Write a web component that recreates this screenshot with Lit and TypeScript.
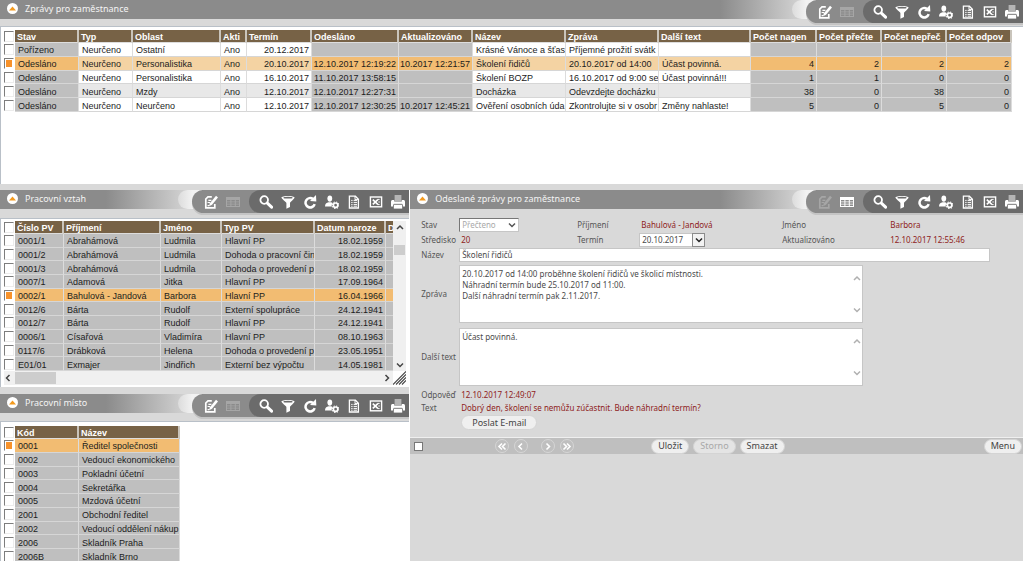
import { LitElement, html, svg, css, nothing } from "lit";
import { customElement, property } from "lit/decorators.js";
import { classMap } from "lit/directives/class-map.js";
import { styleMap } from "lit/directives/style-map.js";

const icons: Record<string, unknown> = {
  edit: svg`
    <path d="M7.8 1.8H4L1.8 4v8.8h9V9" fill="none" stroke="currentColor" stroke-width="1.7"/>
    <path d="M4.400 5.400h3M3.600 7.500h2.600M3.600 10.600h1.600" stroke="currentColor" stroke-width="1.2"/>
    <path d="M12 .8l2 1.8-6 7.2-3 1.4.9-3z" fill="currentColor"/>`,
  table: svg`
    <path fill-rule="evenodd" fill="currentColor" d="M0 2h14v10H0zM1 5v1.4h3.4V5zM5.4 5v1.4h3.4V5zM9.8 5v1.4H13V5zM1 7.3v1.4h3.4V7.3zM5.4 7.3v1.4h3.4V7.3zM9.8 7.3v1.4H13V7.3zM1 9.6V11h3.4V9.6zM5.4 9.6V11h3.4V9.6zM9.8 9.6V11H13V9.6z"/>`,
  search: svg`
    <circle cx="5.2" cy="5" r="3.8" fill="none" stroke="currentColor" stroke-width="1.8"/>
    <path d="M8.6 8.4l4 3.8" stroke="currentColor" stroke-width="3" stroke-linecap="round"/>`,
  filter: svg`
    <path d="M.4 2.6C.4.4 13.6.4 13.6 2.6c0 1.200-4.600 4.600-4.600 5.600v3.800L5.4 13.8V8.2C5.4 7.2.4 3.8.4 2.6z" fill="currentColor"/>
    <ellipse cx="7" cy="2.7" rx="4.600" ry=".9" fill="#6b6b6b"/>`,
  refresh: svg`
    <path d="M10 3.900A4.700 4.700 0 1 0 11.700 9.200" fill="none" stroke="currentColor" stroke-width="2.500"/>
    <path d="M7 6L13 0l.3 6.600z" fill="currentColor"/>`,
  user: svg`
    <ellipse cx="4.8" cy="3.6" rx="2.4" ry="3.1" fill="currentColor"/>
    <path d="M0 11.6c0-3 1.4-3.6 3.6-4.4h2.4c1 .3 1.6.6 1.8 1-1 1-1.4 2.2-.8 3.4z" fill="currentColor"/>
    <circle cx="10.6" cy="10.2" r="2.2" fill="none" stroke="currentColor" stroke-width="1.7"/>
    <circle cx="10.6" cy="10.2" r="3.3" fill="none" stroke="currentColor" stroke-width="1.1" stroke-dasharray="1.3 1.3"/>`,
  doc: svg`
    <path d="M2.4 1.2h6l3 3v8.8h-9z" fill="none" stroke="currentColor" stroke-width="1.3"/>
    <path d="M8 1v3.6h3.6" fill="none" stroke="currentColor"/>
    <path d="M4.2 5.4h1.4M6.6 5.4h3.4M4.2 7.4h1.4M6.6 7.4h3.4M4.2 9.4h1.4M6.6 9.4h3.4M4.2 11.2h1.4M6.6 11.2h3.4" stroke="currentColor" stroke-width="1"/>`,
  excel: svg`
    <rect x="1.4" y="2" width="11.2" height="9.800" fill="none" stroke="currentColor" stroke-width="1.4"/>
    <path d="M3.800 4.6l5 4.8M8.800 4.6l-5 4.8" stroke="currentColor" stroke-width="1.6"/>
    <path d="M8.4 4.4h2.2M9.4 7h1.4M8.4 9.6h2.2" stroke="currentColor" stroke-width="1"/>`,
  print: svg`
    <rect x="3.6" y="0" width="6.8" height="6" fill="#b5b5b5"/>
    <path d="M0 7C0 5.600.6 5 1.800 5h1.400v1.6h7.600V5h1.400c1.200 0 1.800.6 1.800 2v4.4h-2V9.4H2v2H0z" fill="currentColor"/>
    <rect x="2.8" y="9.6" width="8.4" height="4" fill="currentColor"/>
    <path d="M2.800 9.300h8.400" stroke="#6b6b6b" stroke-width=".8"/>`,
};

interface Column {
  title: string;
  width: number;
  align?: "right";
  shade?: boolean;
}

@customElement("panel-header")
class PanelHeader extends LitElement {
  @property() heading = "";
  @property() inactive = "table";

  static styles = css`
    :host {
      display: flex;
      height: 19px;
      background: #8b8b8b;
      font: 9px/18px "Noto Sans", sans-serif;
    }
    .collapse {
      width: 11px;
      height: 11px;
      margin: 3px 7px 0;
      padding: 0;
      border: 0;
      border-radius: 50%;
      background: #fff;
      display: grid;
      place-items: center;
    }
    .title {
      flex: 1;
      margin: 0;
      color: #f4f4f4;
      font: inherit;
      white-space: nowrap;
    }
    .fade {
      width: 86px;
      background: linear-gradient(to right, #8b8b8b, #d2d2d2 80px);
    }
    .glow {
      width: 24px;
      margin: 0 -10px 0 -14px;
      border-radius: 10px 0 0 10px;
      background: linear-gradient(to right, #dcdcdc, #f2f2f2 60%);
    }
    .tools {
      display: flex;
      height: 23px;
      border-radius: 12px 0 0 12px;
      background: #8b8b8b;
      box-shadow: 0 2px 0 #c4c4c4;
      padding-left: 8px;
      position: relative;
    }
    .group {
      display: flex;
    }
    .dark {
      margin-left: 5px;
      padding-left: 6px;
      border-radius: 12px 0 0 12px;
      background: #6b6b6b;
    }
    .tool {
      width: 22px;
      padding: 0;
      border: 0;
      background: none;
      color: #fff;
      display: grid;
      place-items: center;
    }
    .tool:disabled {
      color: #a6a6a6;
    }
  `;

  tool(name: string, label: string) {
    return html`<button class="tool" aria-label=${label} ?disabled=${this.inactive === name}>
      <svg width="14" height="14" viewBox="0 0 14 14">${icons[name]}</svg>
    </button>`;
  }

  render() {
    return html`
      <button class="collapse" aria-label="Sbalit">
        <svg width="7" height="5" viewBox="0 0 7 5"><path d="M0 4.5L3.5.5 7 4.5z" fill="#f39a1e" /></svg>
      </button>
      <h2 class="title">${this.heading}</h2>
      <div class="fade"></div>
      <div class="glow"></div>
      <div class="tools">
        <div class="group">${this.tool("edit", "Formulář")}${this.tool("table", "Tabulka")}</div>
        <div class="group dark">
          ${this.tool("search", "Hledat")}${this.tool("filter", "Filtr")}${this.tool("refresh", "Obnovit")}
          ${this.tool("user", "Nastavení")}${this.tool("doc", "Sestava")}${this.tool("excel", "Excel")}
          ${this.tool("print", "Tisk")}
        </div>
      </div>
    `;
  }
}

@customElement("data-grid")
class DataGrid extends LitElement {
  @property({ attribute: false }) columns: Column[] = [];
  @property({ attribute: false }) rows: string[][] = [];
  @property({ type: Number }) selected = 0;
  @property() label = "";

  static styles = css`
    :host {
      display: block;
      overflow: hidden;
    }
    .grid {
      border-collapse: separate;
      border-spacing: 0;
      table-layout: fixed;
      font: 9px/10px "Liberation Sans", Arial, sans-serif;
      color: #1c1c1c;
    }
    .pick {
      width: 11px;
    }
    .cell,
    .head,
    .mark {
      padding: 0;
      box-sizing: border-box;
      white-space: nowrap;
      overflow: hidden;
    }
    .head {
      padding: 2px 0 0 2px;
      text-align: left;
      color: #fff;
      background: #776246;
      border-bottom: 1px solid #ddd;
      border-right: 2px solid #c9c4bb;
    }
    .cell {
      padding: 2px 2px 0 3px;
      background: #fff;
      border-bottom: 1px solid #d6d6d6;
      border-right: 1px solid #dcdcdc;
    }
    .cell.right {
      padding-left: 0;
      text-align: right;
    }
    .odd .cell {
      background: #e8e8e8;
    }
    .row .shade {
      background: #bfbfbf;
    }
    .on .cell {
      background: #f4d3a3;
    }
    .on .shade {
      background: #f2bc72;
    }
    .box {
      appearance: none;
      display: block;
      width: 10px;
      height: 11px;
      margin: 0;
      box-sizing: border-box;
      background: #fff;
      border: 1px solid #ececec;
      border-top-color: #7d7d7d;
      border-left-color: #7d7d7d;
    }
    .box:checked {
      background: #f7922b;
      border-right-color: #fff;
      border-bottom-color: #fff;
      box-shadow: inset 0 0 0 1px #fff;
    }
  `;

  render() {
    const width = this.columns.reduce((sum, c) => sum + c.width, 11);
    const height = Math.round(((this.rows.length + 1) * 41) / 3);
    return html`
      <table class="grid" aria-label=${this.label} style=${styleMap({ width: `${width}px`, height: `${height}px` })}>
        <colgroup>
          <col class="pick" />
          ${this.columns.map((c) => html`<col style=${styleMap({ width: `${c.width}px` })} />`)}
        </colgroup>
        <thead>
          <tr>
            <td class="mark"><input class="box" type="checkbox" aria-label="Vybrat vše" /></td>
            ${this.columns.map((c) => html`<th class="head" scope="col">${c.title}</th>`)}
          </tr>
        </thead>
        <tbody>
          ${this.rows.map(
            (row, i) => html`<tr class=${classMap({ row: true, odd: i % 2 === 1 && this.columns.length > 6, on: i === this.selected })}>
              <td class="mark">
                <input class="box" type="checkbox" aria-label=${row[0]} .checked=${i === this.selected} />
              </td>
              ${this.columns.map(
                (c, j) =>
                  html`<td class=${classMap({ cell: true, shade: !!c.shade, right: c.align === "right" })}>
                    ${row[j] || nothing}
                  </td>`,
              )}
            </tr>`,
          )}
        </tbody>
      </table>
    `;
  }
}

const chevron = (dir: "up" | "down" | "left" | "right") => {
  const d = { up: "M1 6l3-3 3 3", down: "M1 2.5l3 3 3-3", left: "M5.5 1l-3 3 3 3", right: "M2.5 1l3 3-3 3" }[dir];
  return html`<svg width="8" height="8" viewBox="0 0 8 8">
    <path d=${d} fill="none" stroke="currentColor" stroke-width="1.5" />
  </svg>`;
};

@customElement("message-form")
class MessageForm extends LitElement {
  static styles = css`
    :host {
      display: block;
      font: 8px/14px "Noto Sans", sans-serif;
      color: #555;
    }
    .form {
      display: grid;
      grid-template-columns: 38px 118px 62px 143px 106px 1fr;
      align-items: center;
      padding: 9px 33px 7px 11px;
      row-gap: 1px;
    }
    .wide {
      grid-column: 2 / -1;
    }
    .label {
      white-space: nowrap;
    }
    .value {
      padding-left: 2px;
      color: #8f1d22;
      white-space: nowrap;
    }
    .state,
    .date,
    .name,
    .memo {
      font: inherit;
      color: #4a4a4a;
      background: #fff;
      box-sizing: border-box;
      border: 1px solid #c6c6c6;
      margin: 0;
    }
    .picker {
      position: relative;
      display: flex;
      align-items: center;
    }
    .short {
      width: 60px;
    }
    .state {
      appearance: none;
      width: 100%;
      height: 14px;
      padding: 0 2px;
      border-top-color: #777;
      border-left-color: #777;
      line-height: 12px;
      color: #a9a9a9;
      opacity: 1;
    }
    .arrow {
      position: absolute;
      right: 3px;
      display: flex;
      color: #555;
      pointer-events: none;
    }
    .medium {
      width: 66px;
    }
    .date {
      flex: 1;
      min-width: 0;
      height: 14px;
      padding: 0 2px;
      border-right: 0;
    }
    .open {
      width: 13px;
      height: 14px;
      padding: 0;
      display: grid;
      place-items: center;
      background: #f2f2f2;
      border: 1px solid #8b8b8b;
      color: #222;
    }
    .name {
      width: 100%;
      height: 14px;
      padding: 0 2px;
    }
    .area {
      position: relative;
      display: flex;
      width: 404px;
      max-width: 100%;
      padding: 2px 0;
    }
    .memo {
      flex: 1;
      height: 58px;
      padding: 2px 14px 2px 2px;
      line-height: 11px;
      resize: none;
      overflow: hidden;
    }
    .rail {
      position: absolute;
      top: 11px;
      right: 2px;
      bottom: 11px;
      display: flex;
      flex-direction: column;
      justify-content: space-between;
      color: #b0b0b0;
    }
    .reply {
      line-height: 12px;
    }
    .send {
      display: flex;
    }
    .pill {
      height: 15px;
      padding: 0 6px;
      border: 1px solid #d4d4d4;
      border-radius: 8px;
      background: #efefef;
      color: #444;
      font: 9px/12px "Noto Sans", sans-serif;
      white-space: nowrap;
    }
    .mail {
      margin-left: 2px;
      padding: 0 10px;
    }
    .pill:disabled {
      color: #a8a8a8;
      background: #e4e4e4;
    }
    .bar {
      display: flex;
      align-items: center;
      height: 16px;
      padding: 0 1px 0 4px;
      background: #bfbfbf;
      border-top: 1px solid #efefef;
    }
    .all {
      appearance: none;
      width: 9px;
      height: 9px;
      margin: 0 72px 0 0;
      box-sizing: border-box;
      background: #fff;
      border: 1px solid #777;
    }
    .nav {
      width: 14px;
      height: 14px;
      margin-right: 5px;
      padding: 0;
      border: 1px solid #d6d6d6;
      border-radius: 50%;
      background: none;
      display: grid;
      place-items: center;
      color: #fff;
    }
    .prev {
      margin-right: 13px;
    }
    .actions {
      display: flex;
      gap: 4px;
      margin-left: 72px;
    }
    .menu {
      margin-left: auto;
    }
  `;

  memo(id: string, label: string, text: string) {
    return html`
      <label class="label" for=${id}>${label}</label>
      <div class="wide area">
        <textarea class="memo" id=${id} .value=${text}></textarea>
        <div class="rail">${chevron("up")}${chevron("down")}</div>
      </div>
    `;
  }

  nav(kind: string, label: string) {
    const d: Record<string, string> = {
      first: "M5 1.5L2 4.5l3 3M8.5 1.5l-3 3 3 3",
      prev: "M6 1.5L3 4.5l3 3",
      next: "M3.5 1.5l3 3-3 3",
      last: "M1.5 1.5l3 3-3 3M5 1.5l3 3-3 3",
    };
    return html`<button class=${classMap({ nav: true, prev: kind === "prev" })} aria-label=${label}>
      <svg width="10" height="9" viewBox="0 0 10 9">
        <path d=${d[kind]} fill="none" stroke="currentColor" stroke-width="1.6" />
      </svg>
    </button>`;
  }

  render() {
    return html`
      <div class="form">
        <label class="label" for="state">Stav</label>
        <div class="picker short">
          <select class="state" id="state" disabled>
            <option>Přečteno</option>
          </select>
          <span class="arrow">${chevron("down")}</span>
        </div>
        <span class="label">Příjmení</span>
        <span class="value">Bahulová - Jandová</span>
        <span class="label">Jméno</span>
        <span class="value">Barbora</span>

        <span class="label">Středisko</span>
        <span class="value">20</span>
        <label class="label" for="date">Termín</label>
        <div class="picker medium">
          <input class="date" id="date" value="20.10.2017" />
          <button class="open" aria-label="Kalendář">${chevron("down")}</button>
        </div>
        <span class="label">Aktualizováno</span>
        <span class="value">12.10.2017 12:55:46</span>

        <label class="label" for="name">Název</label>
        <div class="wide picker"><input class="name" id="name" value="Školení řidičů" /></div>

        ${this.memo(
          "message",
          "Zpráva",
          "20.10.2017 od 14:00 proběhne školení řidičů ve školicí místnosti.\nNáhradní termín bude 25.10.2017 od 11:00.\nDalší náhradní termín pak 2.11.2017.",
        )}
        ${this.memo("extra", "Další text", "Účast povinná.")}

        <span class="label reply">Odpověď</span>
        <span class="wide value reply">12.10.2017 12:49:07</span>
        <span class="label reply">Text</span>
        <span class="wide value reply">Dobrý den, školení se nemůžu zúčastnit. Bude náhradní termín?</span>
        <div class="wide send"><button class="pill mail">Poslat E-mail</button></div>
      </div>
      <div class="bar">
        <input class="all" type="checkbox" aria-label="Vybrat záznam" />
        ${this.nav("first", "První")}${this.nav("prev", "Předchozí")}${this.nav("next", "Další")}${this.nav(
          "last",
          "Poslední",
        )}
        <div class="actions">
          <button class="pill">Uložit</button>
          <button class="pill" disabled>Storno</button>
          <button class="pill">Smazat</button>
        </div>
        <button class="pill menu">Menu</button>
      </div>
    `;
  }
}

const messageColumns: Column[] = [
  { title: "Stav", width: 64, shade: true },
  { title: "Typ", width: 54 },
  { title: "Oblast", width: 88 },
  { title: "Akti", width: 26 },
  { title: "Termín", width: 65, align: "right" },
  { title: "Odesláno", width: 87, align: "right", shade: true },
  { title: "Aktualizováno", width: 74, align: "right", shade: true },
  { title: "Název", width: 93 },
  { title: "Zpráva", width: 93 },
  { title: "Další text", width: 92 },
  { title: "Počet nagen", width: 66, align: "right", shade: true },
  { title: "Počet přečte", width: 65, align: "right", shade: true },
  { title: "Počet nepřeč", width: 65, align: "right", shade: true },
  { title: "Počet odpov", width: 65, align: "right", shade: true },
];

const messages = [
  ["Pořízeno", "Neurčeno", "Ostatní", "Ano", "20.12.2017", "", "", "Krásné Vánoce a šťas", "Příjemné prožití svátk", "", "", "", "", ""],
  ["Odesláno", "Neurčeno", "Personalistika", "Ano", "20.10.2017", "12.10.2017 12:19:22", "10.2017 12:21:57", "Školení řidičů", "20.10.2017 od 14:00", "Účast povinná.", "4", "2", "2", "2"],
  ["Odesláno", "Neurčeno", "Personalistika", "Ano", "16.10.2017", "11.10.2017 13:58:15", "", "Školení BOZP", "16.10.2017 od 9:00 se", "Účast povinná!!!", "1", "1", "0", "0"],
  ["Odesláno", "Neurčeno", "Mzdy", "Ano", "12.10.2017", "12.10.2017 12:27:31", "", "Docházka", "Odevzdejte docházku", "", "38", "0", "38", "0"],
  ["Odesláno", "Neurčeno", "Neurčeno", "Ano", "12.10.2017", "12.10.2017 12:30:25", "10.2017 12:45:21", "Ověření osobních úda", "Zkontrolujte si v osobr", "Změny nahlaste!", "5", "0", "5", "0"],
];

const contractColumns: Column[] = [
  { title: "Číslo PV", width: 49, shade: true },
  { title: "Příjmení", width: 97, shade: true },
  { title: "Jméno", width: 61, shade: true },
  { title: "Typ PV", width: 93, shade: true },
  { title: "Datum naroze", width: 71, shade: true, align: "right" },
  { title: "D", width: 60, shade: true },
];

const contracts = [
  ["0001/1", "Abrahámová", "Ludmila", "Hlavní PP", "18.02.1959"],
  ["0001/2", "Abrahámová", "Ludmila", "Dohoda o pracovní čin", "18.02.1959"],
  ["0001/3", "Abrahámová", "Ludmila", "Dohoda o provedení p", "18.02.1959"],
  ["0007/1", "Adamová", "Jitka", "Hlavní PP", "17.09.1964"],
  ["0002/1", "Bahulová - Jandová", "Barbora", "Hlavní PP", "16.04.1966"],
  ["0012/6", "Bárta", "Rudolf", "Externí spolupráce", "24.12.1941"],
  ["0012/7", "Bárta", "Rudolf", "Hlavní PP", "24.12.1941"],
  ["0006/1", "Císařová", "Vladimíra", "Hlavní PP", "08.10.1963"],
  ["0117/6", "Drábková", "Helena", "Dohoda o provedení p", "23.05.1951"],
  ["E01/01", "Exmajer", "Jindřich", "Externí bez výpočtu", "14.05.1981"],
];

const placeColumns: Column[] = [
  { title: "Kód", width: 64, shade: true },
  { title: "Název", width: 101, shade: true },
];

const places = [
  ["0001", "Ředitel společnosti"],
  ["0002", "Vedoucí ekonomického"],
  ["0003", "Pokladní účetní"],
  ["0004", "Sekretářka"],
  ["0005", "Mzdová účetní"],
  ["2001", "Obchodní ředitel"],
  ["2002", "Vedoucí oddělení nákup"],
  ["2006", "Skladník Praha"],
  ["2006B", "Skladník Brno"],
];

@customElement("app-root")
class AppRoot extends LitElement {
  static styles = css`
    :host {
      display: flex;
      flex-direction: column;
      height: 100vh;
      overflow: hidden;
      background: #d9d9d9;
    }
    .body {
      margin-top: 7px;
      padding: 3px 0 0 3px;
      background: #fff;
      border-top: 1px solid #b9c0c8;
      border-left: 1px solid #b9c0c8;
      box-sizing: border-box;
    }
    .messages {
      min-height: 158px;
      margin-bottom: 6px;
    }
    .lower {
      flex: 1;
      min-height: 0;
      display: grid;
      grid-template-columns: 2fr 3fr;
    }
    .left {
      min-width: 0;
      min-height: 0;
      display: flex;
      flex-direction: column;
    }
    .right {
      min-width: 0;
      border-left: 1px solid #fff;
    }
    .contracts {
      display: grid;
      grid-template-columns: 1fr 13px;
      grid-template-rows: auto 14px;
      margin-top: 9px;
      margin-bottom: 7px;
      padding: 2px 3px 2px;
    }
    .narrow {
      min-width: 0;
    }
    .bar {
      display: flex;
      justify-content: space-between;
      align-items: center;
      background: #f0f0f0;
      color: #444;
    }
    .vertical {
      flex-direction: column;
      padding: 2px 0;
    }
    .horizontal {
      padding: 0 2px 0 0;
    }
    .thumb {
      background: #cdcdcd;
    }
    .tall {
      width: 11px;
      height: 10px;
      margin: 14px 0 auto;
    }
    .long {
      width: 41px;
      height: 12px;
      margin: 0 auto 0 3px;
    }
    .grip {
      display: block;
    }
    .places {
      flex: 1;
      min-height: 0;
      margin-top: 8px;
      padding-top: 4px;
      overflow: hidden;
    }
  `;

  render() {
    return html`
      <panel-header heading="Zprávy pro zaměstnance"></panel-header>
      <section class="body messages">
        <data-grid label="Zprávy pro zaměstnance" .columns=${messageColumns} .rows=${messages} .selected=${1}></data-grid>
      </section>
      <div class="lower">
        <div class="left">
          <panel-header heading="Pracovní vztah"></panel-header>
          <section class="body contracts">
            <data-grid class="narrow" label="Pracovní vztah" .columns=${contractColumns} .rows=${contracts} .selected=${4}></data-grid>
            <div class="bar vertical">
              ${chevron("up")}
              <div class="thumb tall"></div>
              ${chevron("down")}
            </div>
            <div class="bar horizontal">
              ${chevron("left")}
              <div class="thumb long"></div>
              ${chevron("right")}
            </div>
            <svg class="grip" width="13" height="14" viewBox="0 0 13 14">
              <path d="M0 13.5L13 .5M3 13.5L13 3.5M6 13.5L13 6.5M9 13.5L13 9.5" stroke="#444" stroke-width="1.1" />
            </svg>
          </section>
          <panel-header heading="Pracovní místo"></panel-header>
          <section class="body places">
            <data-grid label="Pracovní místo" .columns=${placeColumns} .rows=${places} .selected=${0}></data-grid>
          </section>
        </div>
        <section class="right">
          <panel-header heading="Odeslané zprávy pro zaměstnance" inactive="edit"></panel-header>
          <message-form></message-form>
        </section>
      </div>
    `;
  }
}
